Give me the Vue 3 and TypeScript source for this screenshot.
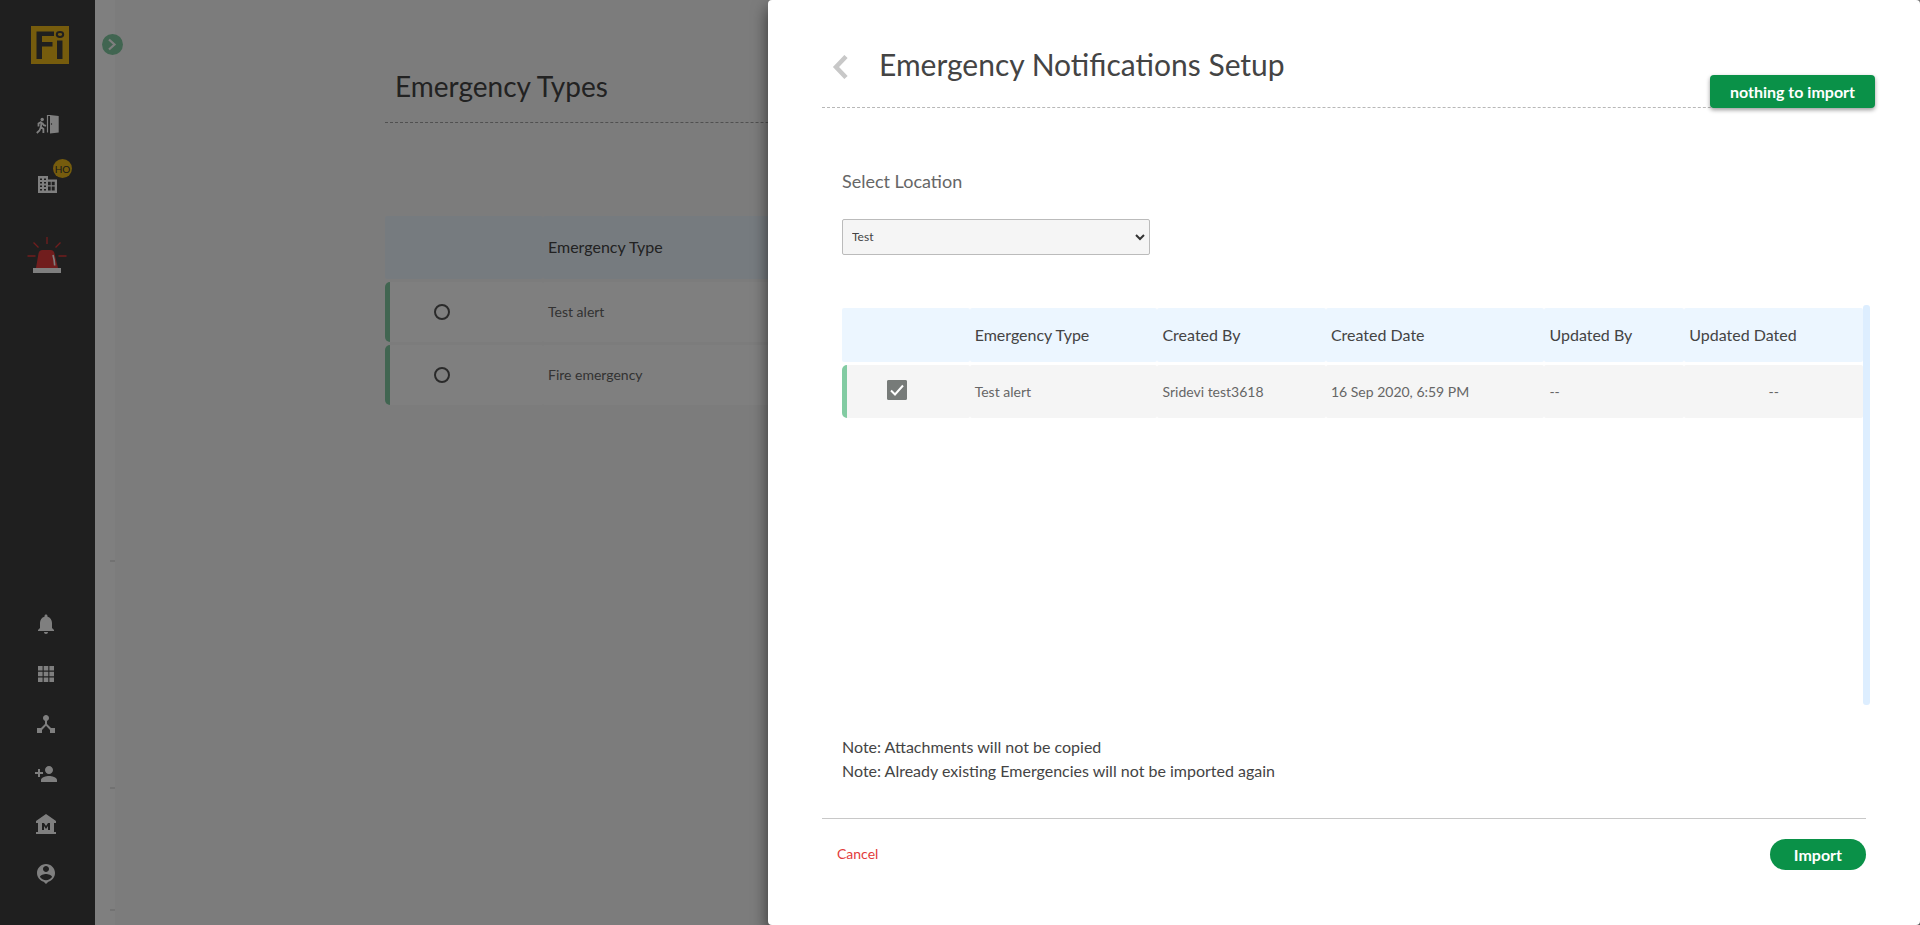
<script setup lang="ts">
import { ref } from 'vue'

interface EmergencyType {
  id: number
  name: string
}

interface ImportRow extends EmergencyType {
  createdBy: string
  createdDate: string
  updatedBy: string
  updatedDate: string
}

interface NavItem {
  label: string
  path: string
}

const existing: EmergencyType[] = [
  { id: 1, name: 'Test alert' },
  { id: 2, name: 'Fire emergency' },
]

const rows: ImportRow[] = [
  {
    id: 1,
    name: 'Test alert',
    createdBy: 'Sridevi test3618',
    createdDate: '16 Sep 2020, 6:59 PM',
    updatedBy: '--',
    updatedDate: '--',
  },
]

const columns: string[] = ['Emergency Type', 'Created By', 'Created Date', 'Updated By', 'Updated Dated']

const navItems: NavItem[] = [
  {
    label: 'Notifications',
    path: 'M12 22c1.1 0 2-.9 2-2h-4c0 1.1.89 2 2 2zm6-6v-5c0-3.07-1.64-5.64-4.5-6.32V4c0-.83-.67-1.5-1.5-1.5s-1.5.67-1.5 1.5v.68C7.63 5.36 6 7.92 6 11v5l-2 2v1h16v-1l-2-2z',
  },
  {
    label: 'Apps',
    path: 'M4 4h4.6v4.6H4zM9.7 4h4.6v4.6H9.7zM15.4 4H20v4.6h-4.6zM4 9.7h4.6v4.6H4zM9.7 9.7h4.6v4.6H9.7zM15.4 9.7H20v4.6h-4.6zM4 15.4h4.6V20H4zM9.7 15.4h4.6V20H9.7zM15.4 15.4H20V20h-4.6z',
  },
  {
    label: 'Hub',
    path: 'M17 16l-4-4V8.82C14.16 8.4 15 7.3 15 6c0-1.66-1.34-3-3-3S9 4.34 9 6c0 1.3.84 2.4 2 2.82V12l-4 4H3v5h5v-3.05l4-4.2 4 4.2V21h5v-5h-4z',
  },
  {
    label: 'Add person',
    path: 'M15 12c2.21 0 4-1.79 4-4s-1.79-4-4-4-4 1.79-4 4 1.79 4 4 4zm-9-2V7H4v3H1v2h3v3h2v-3h3v-2H6zm9 4c-2.67 0-8 1.34-8 4v2h16v-2c0-2.66-5.33-4-8-4z',
  },
  {
    label: 'Museum',
    path: 'M22 11V9L12 2 2 9v2h2v9H2v2h20v-2h-2v-9h2zm-6 7h-2v-4l-2 3-2-3v4H8v-7h2l2 3 2-3h2v7z',
  },
  {
    label: 'Profile',
    path: 'M12 2c-4.97 0-9 4.03-9 9 0 4.17 2.84 7.67 6.69 8.69L12 22l2.31-2.31C18.16 18.67 21 15.17 21 11c0-4.97-4.03-9-9-9zm0 2c1.66 0 3 1.34 3 3s-1.34 3-3 3-3-1.34-3-3 1.34-3 3-3zm0 14.3c-2.5 0-4.71-1.28-6-3.22.03-1.99 4-3.08 6-3.08 1.99 0 5.97 1.09 6 3.08-1.29 1.94-3.5 3.22-6 3.22z',
  },
]

const selectedLocation = ref('Test')
const selectedType = ref<number | null>(null)
const chosen = ref<number[]>([1])
</script>

<template>
  <div class="shell">
    <aside class="sidebar">
      <svg class="logo" viewBox="0 0 38 38" role="img" aria-label="Fi">
        <rect width="38" height="38" fill="#edb91a" />
        <path d="M5.500 5.500h17.500v4.500h-12v6h10.500v4.500h-10.500v12.500h-5.500z" fill="#3e3e3e" />
        <path d="M26 14.500h5.500v18.500h-5.500z" fill="#3e3e3e" />
        <ellipse cx="29" cy="8.500" rx="3.200" ry="2.400" fill="none" stroke="#3e3e3e" stroke-width="2" />
      </svg>

      <nav class="nav-top" aria-label="Modules">
        <button type="button" class="nav-btn" aria-label="Visitors">
          <svg class="icon-visitor" viewBox="0 0 24 20">
            <circle cx="6.200" cy="5.500" r="1.700" fill="#fff" />
            <path d="M5.500 7.800L2.500 9.600V12.500M5.600 8l-.7 5 2.500 2v4M4.900 13l-1.400 3.500L.8 19M6.300 9l1.500 2.200 2.200.7" fill="none" stroke="#fff" stroke-width="1.800" />
            <path d="M11.500 18.500V1.500h3" fill="none" stroke="#fff" stroke-width="1.200" />
            <path d="M14 1l8.700 1v16.500L14 19.500z" fill="#fff" />
            <circle cx="15.500" cy="10" r=".7" fill="#3e3e3e" />
          </svg>
        </button>
        <button type="button" class="nav-btn nav-location" aria-label="Head office">
          <svg class="icon-building" viewBox="0 0 20 18">
            <path d="M0 0h10v3.500h9V17H0z" fill="#fff" />
            <path d="M2 2.500h2v1.500H2zM6 2.500h2v1.500H6zM2 6h2v1.500H2zM6 6h2v1.500H6zM2 9.500h2V11H2zM6 9.500h2V11H6zM2 13h2v1.500H2zM6 13h2v1.500H6zM10 5.700h2.700v3.600H10zM13.700 5.700h3v3.600h-3zM10 10.500h2.700v4H10zM13.700 10.500h3v4h-3z" fill="#3e3e3e" />
          </svg>
          <span class="badge">HO</span>
        </button>
        <button type="button" class="nav-btn" aria-label="Emergency">
          <svg class="icon-siren" viewBox="0 0 40 38">
            <path d="M20 1v7M6.500 6.500l5 5M33.500 6.500l-5 5M.5 20h8M31.500 20h8" stroke="#e23b3b" stroke-width="1.300" />
            <path d="M9 32l2.500-14.500q.6-3.500 4-3.500h8q3.400 0 4 3.500L31 32z" fill="#e23b3b" />
            <path d="M26 19q1.500 5 1.700 10.500" fill="none" stroke="#fff" stroke-width="1.600" />
            <path d="M6 32h28v5H6z" fill="#fff" />
          </svg>
        </button>
      </nav>

      <nav class="nav-bottom" aria-label="Account">
        <button v-for="item in navItems" :key="item.label" type="button" class="nav-btn" :aria-label="item.label">
          <svg class="icon-nav" viewBox="0 0 24 24"><path :d="item.path" fill="#fff" /></svg>
        </button>
      </nav>
    </aside>

    <div class="rail">
      <button type="button" class="expand" aria-label="Expand menu">
        <svg viewBox="0 0 21 21"><path d="M7 5.500l5.500 5L7 15.500" fill="none" stroke="#fff" stroke-width="2.200" /></svg>
      </button>
      <div class="ticks"><i></i><i></i><i></i></div>
    </div>

    <main class="page">
      <h1 class="page-title">Emergency Types</h1>
      <table class="types">
        <colgroup>
          <col class="col-pick" />
          <col />
        </colgroup>
        <thead>
          <tr>
            <th></th>
            <th>Emergency Type</th>
          </tr>
        </thead>
        <tbody>
          <tr v-for="type in existing" :key="type.id">
            <td>
              <input v-model="selectedType" type="radio" name="type" :value="type.id" :aria-label="type.name" />
            </td>
            <td>{{ type.name }}</td>
          </tr>
        </tbody>
      </table>
    </main>

    <div class="backdrop"></div>

    <section class="panel" role="dialog" aria-labelledby="panel-title">
      <header class="panel-head">
        <button type="button" class="back" aria-label="Back">
          <svg viewBox="0 0 16 24"><path d="M14 1.500L4 12l10 10.500" fill="none" stroke="#c8c8c8" stroke-width="4.500" /></svg>
        </button>
        <h2 id="panel-title">Emergency Notifications Setup</h2>
      </header>

      <div class="panel-body">
        <label class="field-label" for="location">Select Location</label>
        <div class="select-wrap">
          <select id="location" v-model="selectedLocation">
            <option>Test</option>
          </select>
          <svg class="caret" viewBox="0 0 10 7"><path d="M1 1l4 4 4-4" fill="none" stroke="#333" stroke-width="2" /></svg>
        </div>

        <div class="list">
          <table class="imports">
            <colgroup>
              <col class="c1" />
              <col class="c2" />
              <col class="c3" />
              <col class="c4" />
              <col class="c5" />
              <col class="c6" />
            </colgroup>
            <thead>
              <tr>
                <th></th>
                <th v-for="column in columns" :key="column">{{ column }}</th>
              </tr>
            </thead>
            <tbody>
              <tr v-for="row in rows" :key="row.id">
                <td>
                  <label class="check">
                    <input v-model="chosen" type="checkbox" :value="row.id" :aria-label="row.name" />
                    <svg viewBox="0 0 20 20"><path d="M4 10.500l4 4L16 5.500" fill="none" stroke="#fff" stroke-width="2" /></svg>
                  </label>
                </td>
                <td>{{ row.name }}</td>
                <td>{{ row.createdBy }}</td>
                <td>{{ row.createdDate }}</td>
                <td>{{ row.updatedBy }}</td>
                <td class="centered">{{ row.updatedDate }}</td>
              </tr>
            </tbody>
          </table>
          <div class="track"></div>
        </div>

        <p class="notes">
          Note: Attachments will not be copied<br />
          Note: Already existing Emergencies will not be imported again
        </p>
      </div>

      <footer class="panel-foot">
        <button type="button" class="cancel">Cancel</button>
        <button type="button" class="import">Import</button>
      </footer>

      <div class="toast" role="status">nothing to import</div>
    </section>
  </div>
</template>

<style>
body {
  margin: 0;
}
</style>

<style scoped>
.shell {
  display: flex;
  position: relative;
  min-height: 100vh;
  overflow: hidden;
  background: #f9f9f9;
  color: #444;
  font-family: Lato, "Open Sans", sans-serif;
  font-size: 16px;
}
.shell *,
.shell *::before {
  box-sizing: border-box;
}
button {
  padding: 0;
  border: 0;
  background: none;
  font: inherit;
  cursor: pointer;
}
svg {
  display: block;
}

.sidebar {
  display: flex;
  flex-direction: column;
  flex: none;
  width: 95px;
  padding: 26px 0 39px;
  background: #3e3e3e;
}
.logo {
  width: 38px;
  height: 38px;
  margin-left: 31px;
}
.nav-top {
  display: flex;
  flex-direction: column;
  align-items: flex-start;
  padding: 50px 0 0 27px;
}
.icon-visitor {
  width: 24px;
  height: 20px;
  margin-left: 9px;
}
.nav-location {
  position: relative;
  margin: 42px 0 42px 11px;
}
.icon-building {
  width: 20px;
  height: 18px;
}
.badge {
  position: absolute;
  top: -17px;
  left: 15px;
  width: 19px;
  height: 19px;
  border-radius: 50%;
  background: #edb91a;
  color: #333;
  font-size: 10px;
  line-height: 20px;
  text-align: center;
}
.icon-siren {
  width: 40px;
  height: 38px;
}
.nav-bottom {
  display: flex;
  flex-direction: column;
  align-items: flex-start;
  gap: 26px;
  margin-top: auto;
  padding-left: 34px;
}
.icon-nav {
  width: 24px;
  height: 24px;
}

.rail {
  display: flex;
  flex-direction: column;
  flex: none;
  width: 20px;
  padding-top: 34px;
  background: #fff;
}
.expand {
  position: relative;
  z-index: 1;
  width: 21px;
  height: 21px;
  margin-left: 7px;
  border-radius: 50%;
  background: #82cba2;
}
.ticks {
  display: flex;
  flex-direction: column;
  align-items: flex-end;
  margin-top: auto;
  padding-bottom: 14px;
}
.ticks i {
  width: 5px;
  height: 2px;
  background: #e4e4e4;
}
.ticks i:first-child {
  margin-bottom: 225px;
}
.ticks i:last-child {
  margin-top: 120px;
}

.page {
  flex: 1;
  padding: 64px 120px 40px 270px;
}
.page-title,
.panel-head h2 {
  margin: 0;
  font-weight: 400;
  line-height: 44px;
}
.page-title {
  padding: 0 10px 14px;
  border-bottom: 1px dashed #a0a0a0;
  font-size: 28px;
}
.panel-head h2 {
  font-size: 30px;
}
table {
  border-spacing: 0 3px;
  table-layout: fixed;
  text-align: left;
}
th {
  font-weight: 400;
}
th,
td {
  border-radius: 2px;
}
td {
  color: #666;
  font-size: 14px;
}
td:first-child {
  border-left: 5px solid #82cba2;
  border-radius: 5px 2px 2px 5px;
}

.types {
  width: 100%;
  margin-top: 90px;
}
.types .col-pick {
  width: 158px;
}
.types th {
  height: 63px;
  padding: 0 5px 2px;
  background: #ecf6ff;
}
.types td {
  height: 60px;
  padding: 0 5px 2px;
  background: #fff;
}
.types td:first-child {
  padding: 0 0 0 44px;
}
.types input {
  display: block;
  width: 16px;
  height: 16px;
  margin: 0;
  border: 2px solid #555;
  border-radius: 50%;
  appearance: none;
}

.backdrop {
  position: absolute;
  z-index: 2;
  inset: 0;
  background: rgba(0, 0, 0, 0.5);
}
.panel {
  display: flex;
  position: absolute;
  z-index: 3;
  top: 0;
  right: 0;
  bottom: 0;
  flex-direction: column;
  width: 60%;
  padding: 42px 54px 55px;
  border-radius: 4px;
  background: #fff;
  box-shadow: 0 8px 16px rgba(0, 0, 0, 0.6);
}
.panel-head {
  display: flex;
  align-items: flex-start;
  gap: 31px;
  height: 66px;
  padding: 0 10px;
  border-bottom: 1px dashed #b8b8b8;
}
.back {
  padding-top: 13px;
}
.back svg {
  width: 16px;
  height: 24px;
}
.panel-body {
  padding: 0 0 0 20px;
}
.field-label {
  display: block;
  margin-top: 61px;
  color: #666;
  font-size: 18px;
  line-height: 24px;
}
.select-wrap {
  display: grid;
  align-items: center;
  width: 30%;
  min-width: 308px;
  margin-top: 26px;
}
select {
  grid-area: 1 / 1;
  width: 100%;
  height: 36px;
  padding: 0 9px 2px;
  border: 1px solid #bbb;
  border-radius: 2px;
  background: #f5f5f5;
  color: #444;
  font-family: inherit;
  font-size: 12px;
  appearance: none;
}
.caret {
  grid-area: 1 / 1;
  justify-self: end;
  width: 10px;
  height: 7px;
  margin-right: 5px;
  pointer-events: none;
}
.list {
  display: flex;
  align-items: flex-start;
  height: 400px;
  margin: 50px -4px 0 0;
}
.imports {
  flex: 1;
}
.track {
  align-self: stretch;
  flex: none;
  width: 7px;
  border-radius: 3px;
  background: #def;
}
.c1 {
  width: 12.5%;
}
.c2 {
  width: 18.4%;
}
.c3 {
  width: 16.5%;
}
.c4 {
  width: 21.4%;
}
.c5 {
  width: 13.7%;
}
.c6 {
  width: 17.5%;
}
.imports th {
  height: 54px;
  padding: 0 5px 2px;
  background: #ecf6ff;
}
.imports td {
  height: 53px;
  padding: 0 5px;
  background: #f5f5f5;
}
.imports td:first-child {
  padding: 0 0 4px 40px;
}
.imports .centered {
  text-align: center;
}
.check {
  display: grid;
  width: 20px;
  height: 20px;
}
.check input {
  grid-area: 1 / 1;
  width: 20px;
  height: 20px;
  margin: 0;
  border-radius: 2px;
  background: #fff;
  box-shadow: inset 0 0 0 2px #777b79;
  appearance: none;
}
.check input:checked {
  background: #777b79;
}
.check svg {
  grid-area: 1 / 1;
  width: 20px;
  height: 20px;
  pointer-events: none;
}
.notes {
  margin: 30px 0;
  line-height: 24px;
}
.panel-foot {
  display: flex;
  align-items: center;
  justify-content: space-between;
  margin-top: auto;
  padding: 20px 0 0 15px;
  border-top: 1px solid #c8c8c8;
}
.cancel {
  padding-bottom: 2px;
  color: #e23b3b;
  font-size: 14px;
}
.import {
  height: 31px;
  padding: 0 24px 1px;
  border-radius: 16px;
  background: #0a9148;
  color: #fff;
  font-weight: 700;
}
.toast {
  position: absolute;
  top: 75px;
  right: 45px;
  padding: 0 20px;
  border-radius: 4px;
  background: #0a9148;
  box-shadow: 0 2px 4px rgba(0, 0, 0, 0.4);
  color: #fff;
  font-weight: 700;
  line-height: 33px;
}
</style>
